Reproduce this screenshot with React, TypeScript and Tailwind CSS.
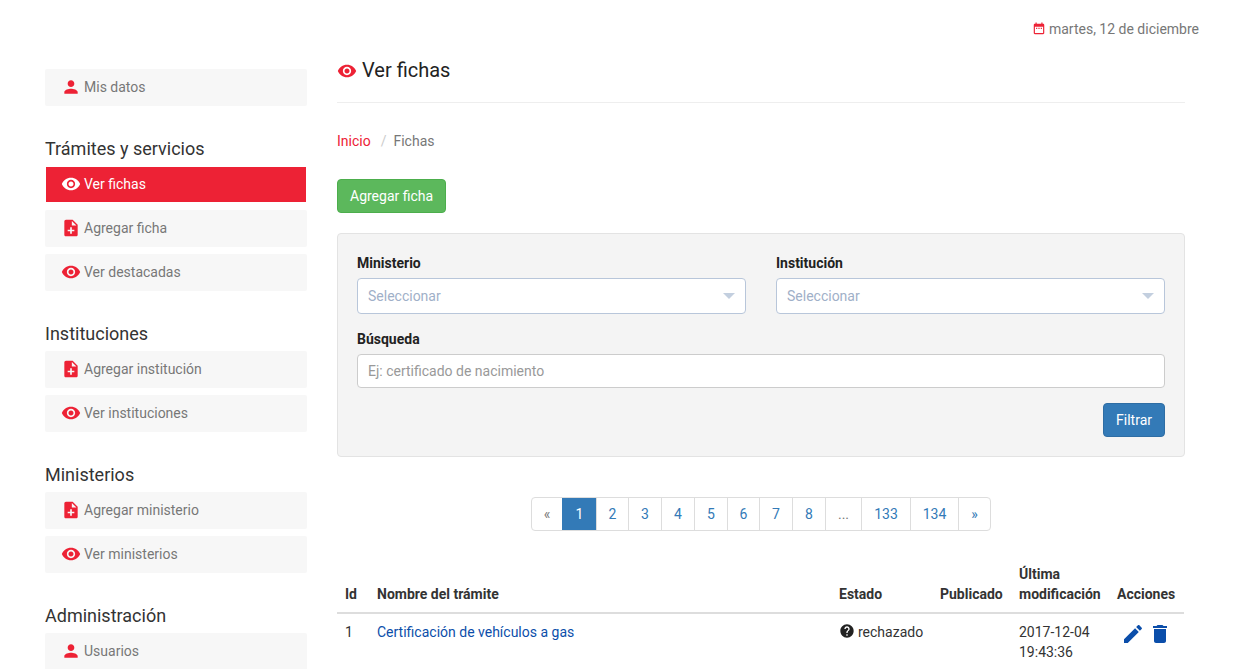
import type { ReactNode } from "react";

const paths = {
  person: "M12 12c2.21 0 4-1.79 4-4s-1.79-4-4-4-4 1.79-4 4 1.79 4 4 4zm0 2c-2.67 0-8 1.34-8 4v2h16v-2c0-2.66-5.33-4-8-4z",
  eye: "M12 4.5C7 4.5 2.73 7.61 1 12c1.73 4.39 6 7.5 11 7.5s9.27-3.11 11-7.5c-1.73-4.39-6-7.5-11-7.5zM12 17c-2.76 0-5-2.24-5-5s2.24-5 5-5 5 2.24 5 5-2.24 5-5 5zm0-8c-1.66 0-3 1.34-3 3s1.34 3 3 3 3-1.34 3-3-1.34-3-3-3z",
  noteAdd: "M14 2H6c-1.1 0-1.99.9-1.99 2L4 20c0 1.1.89 2 1.99 2H18c1.1 0 2-.9 2-2V8l-6-6zm2 14h-3v3h-2v-3H8v-2h3v-3h2v3h3v2zm-3-7V3.5L18.5 9H13z",
  edit: "M3 17.25V21h3.75L17.81 9.94l-3.75-3.75L3 17.25zM20.71 7.04c.39-.39.39-1.02 0-1.41l-2.34-2.34c-.39-.39-1.02-.39-1.41 0l-1.83 1.83 3.75 3.75 1.83-1.83z",
  trash: "M6 19c0 1.1.9 2 2 2h8c1.1 0 2-.9 2-2V7H6v12zM19 4h-3.5l-1-1h-5l-1 1H5v2h14V4z",
  help: "M12 2C6.48 2 2 6.48 2 12s4.48 10 10 10 10-4.48 10-10S17.52 2 12 2zm1 17h-2v-2h2v2zm2.07-7.75l-.9.92C13.45 12.9 13 13.5 13 15h-2v-.5c0-1.1.45-2.1 1.17-2.83l1.24-1.26c.37-.36.59-.86.59-1.41 0-1.1-.9-2-2-2s-2 .9-2 2H8c0-2.21 1.79-4 4-4s4 1.79 4 4c0 .88-.36 1.68-.93 2.25z",
  calendar: "M19 3h-1V1h-2v2H8V1H6v2H5c-1.11 0-1.99.9-1.99 2L3 19c0 1.1.89 2 2 2h14c1.1 0 2-.9 2-2V5c0-1.1-.9-2-2-2zm0 16H5V8h14v11zM7 10h2v2H7zm4 0h2v2h-2zm4 0h2v2h-2z",
};

type IconName = keyof typeof paths;

function Icon({ name, className }: { name: IconName; className: string }) {
  return (
    <svg viewBox="0 0 24 24" fill="currentColor" className={className}>
      <path d={paths[name]} />
    </svg>
  );
}

function NavItem({ icon, label, active }: { icon: IconName; label: string; active?: boolean }) {
  if (active) {
    return (
      <a className="mx-px my-px flex h-[35px] items-center bg-[#ed2235] pb-px pl-[15px] text-white">
        <Icon name={icon} className="mr-[3px] h-5 w-5 text-white" />
        {label}
      </a>
    );
  }
  return (
    <a className="flex h-[37px] items-center rounded-[2px] bg-[#f7f7f7] pb-px pl-4 text-[#777]">
      <Icon name={icon} className="mr-[3px] h-5 w-5 text-[#ed2235]" />
      {label}
    </a>
  );
}

function NavGroup({ title, children }: { title: string; children: ReactNode }) {
  return (
    <section className="mt-[31px]">
      <h3 className="mb-[5px] text-[18px] leading-[24px] text-[#333]">{title}</h3>
      <div className="flex flex-col gap-[7px]">{children}</div>
    </section>
  );
}

function Sidebar() {
  return (
    <aside className="w-[262px] shrink-0 pt-[69px]">
      <NavItem icon="person" label="Mis datos" />
      <NavGroup title="Trámites y servicios">
        <NavItem icon="eye" label="Ver fichas" active />
        <NavItem icon="noteAdd" label="Agregar ficha" />
        <NavItem icon="eye" label="Ver destacadas" />
      </NavGroup>
      <NavGroup title="Instituciones">
        <NavItem icon="noteAdd" label="Agregar institución" />
        <NavItem icon="eye" label="Ver instituciones" />
      </NavGroup>
      <NavGroup title="Ministerios">
        <NavItem icon="noteAdd" label="Agregar ministerio" />
        <NavItem icon="eye" label="Ver ministerios" />
      </NavGroup>
      <NavGroup title="Administración">
        <NavItem icon="person" label="Usuarios" />
      </NavGroup>
    </aside>
  );
}

function SelectBox({ label }: { label: string }) {
  return (
    <div className="w-[389px]">
      <label className="mb-[5px] block font-bold leading-5 text-[#222]">{label}</label>
      <div className="flex h-9 items-center justify-between rounded-[4px] border border-[#b8c6da] bg-white pl-[10px] pr-[10px] text-[#9fb0c8]">
        Seleccionar
        <span className="h-0 w-0 border-x-[6px] border-t-[6px] border-x-transparent border-t-[#c3cfdf]" />
      </div>
    </div>
  );
}

function Filters() {
  return (
    <div className="mt-5 h-[224px] rounded-[4px] border border-[#e3e3e3] bg-[#f4f4f4] px-[19px] pt-[19px]">
      <div className="flex justify-between">
        <SelectBox label="Ministerio" />
        <SelectBox label="Institución" />
      </div>
      <label className="mb-[5px] mt-[15px] block font-bold leading-5 text-[#222]">Búsqueda</label>
      <input
        placeholder="Ej: certificado de nacimiento"
        className="block h-[34px] w-full rounded-[4px] border border-[#ccc] bg-white px-[10px] text-[14px] placeholder:text-[#999]"
      />
      <div className="mt-[15px] flex justify-end">
        <button className="h-[34px] rounded-[4px] border border-[#2e6da4] bg-[#337ab7] px-3 text-white">Filtrar</button>
      </div>
    </div>
  );
}

const pages = [
  { label: "«", w: "w-[30px]", muted: true },
  { label: "1", w: "w-[34px]", active: true },
  { label: "2", w: "w-[32px]" },
  { label: "3", w: "w-[33px]" },
  { label: "4", w: "w-[33px]" },
  { label: "5", w: "w-[33px]" },
  { label: "6", w: "w-[32px]" },
  { label: "7", w: "w-[33px]" },
  { label: "8", w: "w-[33px]" },
  { label: "...", w: "w-[36px]", muted: true },
  { label: "133", w: "w-[49px]" },
  { label: "134", w: "w-[48px]" },
  { label: "»", w: "w-[32px]" },
];

function Pagination() {
  return (
    <nav className="mt-10 flex justify-center">
      <ul className="flex h-[34px] overflow-hidden rounded-[4px] border border-[#ddd]">
        {pages.map((p, i) => (
          <li
            key={p.label}
            className={`flex items-center justify-center ${p.w} ${i > 0 ? "border-l border-[#ddd]" : ""} ${
              p.active ? "border-l-[#337ab7] bg-[#337ab7] text-white" : p.muted ? "text-[#777]" : "text-[#337ab7]"
            }`}
          >
            {p.label}
          </li>
        ))}
      </ul>
    </nav>
  );
}

function FichasTable() {
  return (
    <table className="mt-[25px] w-[847px] table-fixed border-collapse text-left text-[#333]">
      <thead>
        <tr className="border-b-2 border-[#ddd] font-bold leading-5">
          <th className="w-8 p-2 align-bottom">Id</th>
          <th className="p-2 align-bottom">Nombre del trámite</th>
          <th className="w-[101px] p-2 align-bottom">Estado</th>
          <th className="w-[79px] p-2 align-bottom">Publicado</th>
          <th className="w-[98px] p-2 align-bottom">
            Última
            <br />
            modificación
          </th>
          <th className="w-[75px] p-2 align-bottom">Acciones</th>
        </tr>
      </thead>
      <tbody>
        <tr className="leading-5">
          <td className="p-2 align-top">1</td>
          <td className="p-2 align-top text-[#0b4eaa]">Certificación de vehículos a gas</td>
          <td className="whitespace-nowrap p-2 align-top">
            <Icon name="help" className="mb-[5px] mr-[3px] inline h-4 w-4 text-[#222]" />
            rechazado
          </td>
          <td className="p-2" />
          <td className="p-2 align-top">
            2017-12-04
            <br />
            19:43:36
          </td>
          <td className="p-2 align-top">
            <div className="flex gap-[3px] pl-1 text-[#0b4eaa]">
              <Icon name="edit" className="h-6 w-6" />
              <Icon name="trash" className="h-6 w-6" />
            </div>
          </td>
        </tr>
      </tbody>
    </table>
  );
}

export default function App() {
  return (
    <div className="relative h-screen overflow-hidden bg-white font-['Roboto',sans-serif] text-[14px] leading-5">
      <div className="absolute right-[56px] top-[19px] flex items-center text-[#777]">
        <Icon name="calendar" className="mr-[3px] h-3.5 w-3.5 text-[#ed2235]" />
        martes, 12 de diciembre
      </div>
      <div className="flex pl-[45px]">
        <Sidebar />
        <main className="ml-[30px] w-[848px] shrink-0 pt-[57px]">
          <h1 className="flex h-[46px] items-start border-b border-[#eee] text-[20px] leading-[26px] text-[#222]">
            <Icon name="eye" className="mr-[5px] mt-[4px] h-5 w-5 text-[#ed2235]" />
            Ver fichas
          </h1>
          <div className="mt-[28px] flex leading-5 text-[#777]">
            <a className="text-[#ed2235]">Inicio</a>
            <span className="ml-[10px] mr-[7px] text-[#ccc]">/</span>
            Fichas
          </div>
          <button className="mt-[28px] block h-[34px] rounded-[4px] border border-[#4cae4c] bg-[#5cb85c] px-3 text-white">
            Agregar ficha
          </button>
          <Filters />
          <Pagination />
          <FichasTable />
        </main>
      </div>
    </div>
  );
}
